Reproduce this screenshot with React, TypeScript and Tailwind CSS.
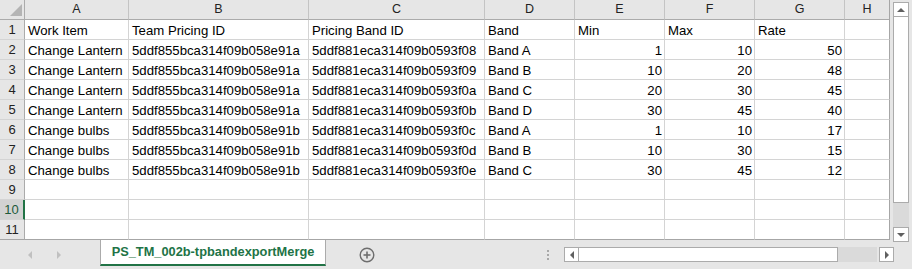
import React from "react";

const cols = ["A", "B", "C", "D", "E", "F", "G", "H"];

const data: (string | number)[][] = [
  ["Work Item", "Team Pricing ID", "Pricing Band ID", "Band", "Min", "Max", "Rate"],
  ["Change Lantern", "5ddf855bca314f09b058e91a", "5ddf881eca314f09b0593f08", "Band A", 1, 10, 50],
  ["Change Lantern", "5ddf855bca314f09b058e91a", "5ddf881eca314f09b0593f09", "Band B", 10, 20, 48],
  ["Change Lantern", "5ddf855bca314f09b058e91a", "5ddf881eca314f09b0593f0a", "Band C", 20, 30, 45],
  ["Change Lantern", "5ddf855bca314f09b058e91a", "5ddf881eca314f09b0593f0b", "Band D", 30, 45, 40],
  ["Change bulbs", "5ddf855bca314f09b058e91b", "5ddf881eca314f09b0593f0c", "Band A", 1, 10, 17],
  ["Change bulbs", "5ddf855bca314f09b058e91b", "5ddf881eca314f09b0593f0d", "Band B", 10, 30, 15],
  ["Change bulbs", "5ddf855bca314f09b058e91b", "5ddf881eca314f09b0593f0e", "Band C", 30, 45, 12],
  [],
  [],
  [],
];

function Tri({ dir, color = "#606060" }: { dir: "up" | "down" | "left" | "right"; color?: string }) {
  const pts =
    dir === "up"
      ? "0,5 4,1 8,5"
      : dir === "down"
      ? "0,1 8,1 4,5"
      : dir === "left"
      ? "5,0 5,8 1,4"
      : "1,0 1,8 5,4";
  const w = dir === "up" || dir === "down" ? 8 : 6;
  const h = dir === "up" || dir === "down" ? 6 : 8;
  return (
    <svg width={w} height={h} viewBox={`0 0 ${w} ${h}`}>
      <polygon points={pts} fill={color} />
    </svg>
  );
}

export default function App() {
  return (
    <div
      className="w-[912px] h-[269px] bg-[#e6e6e6] flex flex-col overflow-hidden text-black"
      style={{ fontFamily: '"Liberation Sans", Arial, sans-serif' }}
    >
      <div className="flex h-[240px]">
        <div className="grid grid-cols-[25px_104px_180px_176px_90px_90px_90px_90px_45px] grid-rows-[20px_repeat(11,20px)] w-[890px] bg-white">
          {/* corner */}
          <div className="bg-[#e6e6e6] border-r border-b border-[#ababab] relative">
            <svg className="absolute left-[10px] top-[4px]" width="12" height="12" viewBox="0 0 12 12">
              <polygon points="0,12 12,12 12,0" fill="#b4b4b4" />
            </svg>
          </div>
          {cols.map((c, i) => (
            <div
              key={c}
              className={`bg-[#e6e6e6] border-b border-[#ababab] flex items-center justify-center text-[12.5px] text-[#222] ${
                i < cols.length - 1 ? "border-r border-r-[#c4c4c4]" : "border-r border-r-[#a6a6a6]"
              }`}
            >
              {c}
            </div>
          ))}
          {data.map((row, r) => {
            const last = r === data.length - 1;
            const sel = r === 9;
            return (
              <React.Fragment key={r}>
                <div
                  className={`flex items-center justify-center text-[13px] border-b ${
                    last ? "border-b-[#a6a6a6]" : "border-b-[#d4d4d4]"
                  } ${
                    sel
                      ? "bg-[#d2d2d2] border-r-2 border-r-[#217346] text-[#1d5a3a]"
                      : "bg-[#e6e6e6] border-r border-r-[#ababab] text-[#222]"
                  }`}
                >
                  {r + 1}
                </div>
                {cols.map((c, ci) => {
                  const v = row[ci];
                  const isNum = typeof v === "number";
                  return (
                    <div
                      key={c}
                      className={`flex items-end pb-[1px] text-[13.2px] leading-[15px] whitespace-nowrap overflow-hidden border-b border-r ${
                        last ? "border-b-[#a6a6a6]" : "border-b-[#d4d4d4]"
                      } ${ci === cols.length - 1 ? "border-r-[#a6a6a6]" : "border-r-[#d4d4d4]"} ${
                        isNum ? "justify-end pr-[2px]" : "justify-start pl-[3px]"
                      }`}
                    >
                      {v !== undefined ? String(v) : ""}
                    </div>
                  );
                })}
              </React.Fragment>
            );
          })}
        </div>
        {/* vertical scrollbar */}
        <div className="ml-[3px] w-[16px] flex flex-col pt-[2px] pb-[0px]">
          <div className="h-[15px] bg-white border border-[#ababab] flex items-center justify-center">
            <Tri dir="up" />
          </div>
          <div className="flex-1 bg-[#dadada] flex flex-col">
            <div className="h-[186px] bg-white border-x border-b border-[#ababab]" />
          </div>
          <div className="h-[15px] bg-white border border-[#ababab] flex items-center justify-center mb-[-2px]">
            <Tri dir="down" />
          </div>
        </div>
      </div>
      {/* tab bar */}
      <div className="flex h-[29px] items-start">
        <div className="w-[100px] h-full flex items-center pl-[27px] gap-[23px]">
          <Tri dir="left" color="#c0c0c0" />
          <Tri dir="right" color="#c0c0c0" />
        </div>
        <div className="w-[226px] h-[26px] bg-white border-x border-[#ababab] border-b-2 border-b-[#217346] flex items-center justify-center">
          <span className="text-[12.8px] font-bold text-[#217346] leading-none mt-[1px]">
            PS_TM_002b-tpbandexportMerge
          </span>
        </div>
        <div className="w-[82px] h-full flex items-center justify-center">
          <svg width="16" height="16" viewBox="0 0 16 16">
            <circle cx="8" cy="8" r="6.8" fill="none" stroke="#6e6e6e" strokeWidth="1.4" />
            <line x1="8" y1="4.5" x2="8" y2="11.5" stroke="#6e6e6e" strokeWidth="1.6" />
            <line x1="4.5" y1="8" x2="11.5" y2="8" stroke="#6e6e6e" strokeWidth="1.6" />
          </svg>
        </div>
        <div className="flex-1 h-full flex items-center">
          <div className="ml-[138px] w-[4px] flex flex-col items-center gap-[2px]">
            <div className="w-[2px] h-[2px] bg-[#a8a8a8]" />
            <div className="w-[2px] h-[2px] bg-[#a8a8a8]" />
            <div className="w-[2px] h-[2px] bg-[#a8a8a8]" />
          </div>
          <div className="ml-[14px] flex items-center h-[15px]">
            <div className="w-[15px] h-[15px] bg-white border border-[#ababab] flex items-center justify-center">
              <Tri dir="left" />
            </div>
            <div className="w-[259px] h-[15px] bg-white border-y border-r border-[#ababab]" />
            <div className="w-[39px] h-[15px] bg-[#dadada]" />
            <div className="w-[2px]" />
            <div className="w-[15px] h-[15px] bg-white border border-[#ababab] flex items-center justify-center">
              <Tri dir="right" />
            </div>
          </div>
        </div>
      </div>
    </div>
  );
}
